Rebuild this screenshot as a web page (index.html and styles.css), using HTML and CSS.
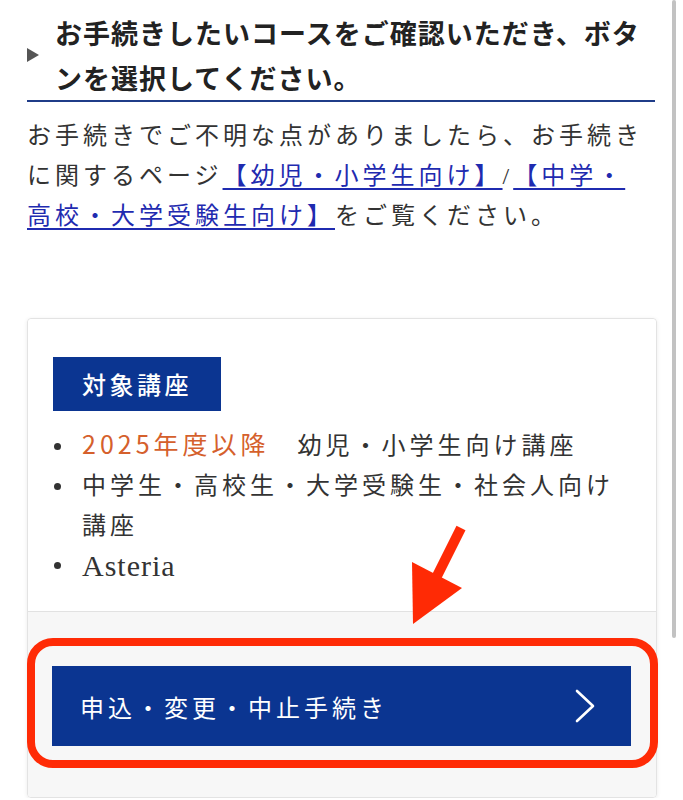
FILE: index.html
```html
<!DOCTYPE html>
<html lang="ja">
<head>
<meta charset="utf-8">
<title>お手続き</title>
<link rel="stylesheet" href="styles.css">
</head>
<body>
<div class="page">
  <h2 class="heading"><span class="marker"></span><span class="heading-text">お手続きしたいコースをご確認いただき、ボタンを選択してください。</span></h2>
  <p class="lead">お手続きでご不明な点がありましたら、お手続きに関するページ<a href="#" class="link">【幼児・小学生向け】</a>/<a href="#" class="link">【中学・高校・大学受験生向け】</a>をご覧ください。</p>

  <section class="card">
    <div class="card-body">
      <div class="badge">対象講座</div>
      <ul class="course-list">
        <li><span class="accent">2025年度以降</span>　幼児・小学生向け講座</li>
        <li>中学生・高校生・大学受験生・社会人向け講座</li>
        <li class="latin">Asteria</li>
      </ul>
    </div>
    <div class="card-foot">
      <a href="#" class="proc-btn"><span>申込・変更・中止手続き</span>
        <svg class="chev" width="20" height="34" viewBox="0 0 20 34"><polyline points="2,2 18,17 2,32" fill="none" stroke="#ffffff" stroke-width="2.6" stroke-linecap="round" stroke-linejoin="round"/></svg>
      </a>
      <div class="highlight"></div>
    </div>
  </section>

  <svg class="callout-arrow" width="70" height="110" viewBox="0 0 70 110">
    <line x1="61" y1="8" x2="34" y2="62" stroke="#ff2a05" stroke-width="10"/>
    <polygon points="12,42 62,68 13,104" fill="#ff2a05"/>
  </svg>
  <div class="scrollbar"></div>
</div>
</body>
</html>
```
FILE: styles.css
```css
html, body {
  margin: 0;
  padding: 0;
  background: #ffffff;
}

body {
  font-family: "Liberation Serif", "Noto Sans CJK JP", serif;
  color: #333333;
}

.page {
  padding-left: 27px;
  width: 630px;
}

.heading {
  margin: 0;
  width: 628px;
  padding-top: 10px;
  display: flex;
  align-items: center;
  border-bottom: 2px solid #1f3c88;
  font-family: "Noto Sans CJK JP", sans-serif;
  font-weight: 700;
  font-size: 27px;
  letter-spacing: 1px;
  line-height: 45px;
  color: #222222;
}

.marker {
  flex: none;
  width: 0;
  height: 0;
  border-left: 12px solid #555555;
  border-top: 7.5px solid transparent;
  border-bottom: 7.5px solid transparent;
  margin-right: 16px;
}

.heading-text {
  flex: 1;
}

.lead {
  margin: 14px 0 0;
  width: 620px;
  font-size: 24px;
  letter-spacing: 4px;
  line-height: 40px;
  color: #333333;
}

.link {
  color: #1f2bb0;
  text-decoration: underline;
  text-decoration-thickness: 1.5px;
  text-underline-offset: 4px;
}

.card {
  margin-top: 82px;
  width: 630px;
  box-sizing: border-box;
  border: 1px solid #e3e3e3;
  border-radius: 4px;
  box-shadow: 0 1px 4px rgba(0, 0, 0, 0.08);
}

.card-body {
  padding: 38px 26px 25px 25px;
  background: #ffffff;
  border-radius: 4px 4px 0 0;
}

.badge {
  display: inline-block;
  height: 54px;
  line-height: 54px;
  padding: 0 29px 0 29px;
  background: #0b3591;
  color: #ffffff;
  font-family: "Noto Sans CJK JP", sans-serif;
  font-weight: 500;
  font-size: 24px;
  letter-spacing: 3.5px;
}

.course-list {
  list-style: none;
  margin: 15px 0 0;
  padding: 0 0 0 29px;
  font-size: 24px;
  letter-spacing: 4px;
  line-height: 40px;
  color: #333333;
}

.course-list li {
  position: relative;
}

.course-list li::before {
  content: "";
  position: absolute;
  left: -28px;
  top: 17px;
  width: 7px;
  height: 7px;
  border-radius: 50%;
  background: #333333;
}

.accent {
  font-family: "Noto Sans CJK JP", sans-serif;
  font-size: 25px;
  line-height: 1;
  color: #d5602c;
  letter-spacing: 4px;
}

.course-list .latin {
  font-size: 30px;
  letter-spacing: 1px;
  line-height: 40px;
  height: 40px;
}

.course-list .latin::before {
  top: 16px;
}

.card-foot {
  position: relative;
  background: #f7f7f7;
  border-top: 1px solid #e2e2e2;
  padding: 54px 25px 51px 24px;
  border-radius: 0 0 4px 4px;
}

.proc-btn {
  display: flex;
  align-items: center;
  justify-content: space-between;
  height: 80px;
  padding: 0 36px 0 28px;
  background: #0b3591;
  color: #ffffff;
  text-decoration: none;
  font-size: 24px;
  letter-spacing: 4px;
}

.chev {
  display: block;
}

.highlight {
  position: absolute;
  left: -1px;
  top: 26px;
  width: 631px;
  height: 130px;
  box-sizing: border-box;
  border: 8px solid #ff2b06;
  border-radius: 26px;
}

.callout-arrow {
  position: absolute;
  left: 400px;
  top: 520px;
}

.scrollbar {
  position: absolute;
  left: 672px;
  top: 0;
  width: 4px;
  height: 638px;
  background: #c2c2c2;
  border-radius: 2px;
}
```
